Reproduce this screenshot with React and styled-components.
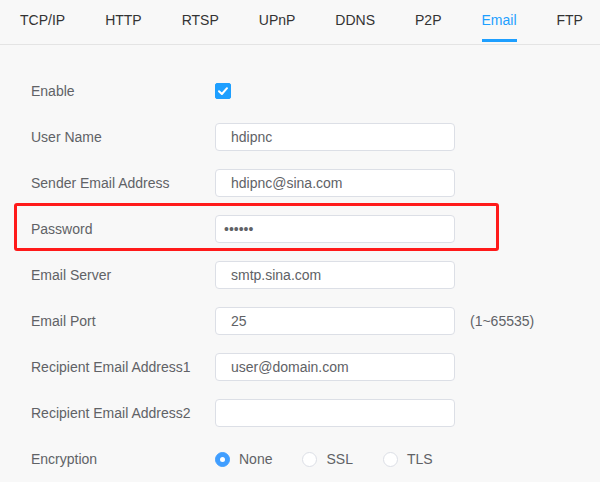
import React, { useState } from "react";
import styled, { createGlobalStyle } from "styled-components";

const TABS = ["TCP/IP", "HTTP", "RTSP", "UPnP", "DDNS", "P2P", "Email", "FTP"];

const FIELDS = [
  { id: "user", label: "User Name", value: "hdipnc" },
  { id: "sender", label: "Sender Email Address", value: "hdipnc@sina.com" },
  { id: "password", label: "Password", value: "123456", type: "password", marked: true },
  { id: "server", label: "Email Server", value: "smtp.sina.com" },
  { id: "port", label: "Email Port", value: "25", hint: "(1~65535)" },
  { id: "rcpt1", label: "Recipient Email Address1", value: "user@domain.com" },
  { id: "rcpt2", label: "Recipient Email Address2", value: "" },
];

const ENCRYPTIONS = ["None", "SSL", "TLS"];

function App() {
  const [tab, setTab] = useState("Email");
  const [enabled, setEnabled] = useState(true);
  const [encryption, setEncryption] = useState("None");
  const [values, setValues] = useState(
    Object.fromEntries(FIELDS.map((f) => [f.id, f.value]))
  );

  return (
    <>
      <GlobalStyle />
      <Page>
        <TabBar>
          {TABS.map((name) => (
            <Tab key={name} $active={name === tab} onClick={() => setTab(name)}>
              {name}
            </Tab>
          ))}
        </TabBar>

        <Form>
          <Row>
            <Label>Enable</Label>
            <Checkbox $checked={enabled} onClick={() => setEnabled(!enabled)}>
              {enabled && (
                <svg width="12" height="12" viewBox="0 0 12 12">
                  <path d="M2 6.2 L4.9 9 L10 3.2" fill="none" stroke="#fff" strokeWidth="2" strokeLinecap="round" strokeLinejoin="round" />
                </svg>
              )}
            </Checkbox>
          </Row>

          {FIELDS.map((f) => (
            <Row key={f.id} $marked={f.marked}>
              <Label>{f.label}</Label>
              <Input
                type={f.type || "text"}
                $password={f.type === "password"}
                value={values[f.id]}
                onChange={(e) => setValues({ ...values, [f.id]: e.target.value })}
              />
              {f.hint && <Hint>{f.hint}</Hint>}
            </Row>
          ))}

          <Row>
            <Label>Encryption</Label>
            <RadioGroup>
              {ENCRYPTIONS.map((opt) => (
                <RadioOption key={opt} onClick={() => setEncryption(opt)}>
                  <Radio $checked={encryption === opt} />
                  {opt}
                </RadioOption>
              ))}
            </RadioGroup>
          </Row>
        </Form>
      </Page>
    </>
  );
}

export default App;

const GlobalStyle = createGlobalStyle`
  body {
    margin: 0;
    background: #f8f8f8;
    font-family: "Liberation Sans", Arial, sans-serif;
  }
`;

const Page = styled.div`
  width: 600px;
  height: 482px;
  overflow: hidden;
  background: #f8f8f8;
`;

const TabBar = styled.div`
  display: flex;
  height: 44px;
  border-bottom: 1px solid #e4e4e4;
`;

const Tab = styled.div`
  position: relative;
  display: flex;
  align-items: center;
  padding: 0 20px 4px;
  font-size: 14px;
  white-space: nowrap;
  cursor: pointer;
  color: ${(p) => (p.$active ? "#1e9fff" : "#333")};

  &::after {
    content: "";
    display: ${(p) => (p.$active ? "block" : "none")};
    position: absolute;
    left: 20px;
    right: 20px;
    bottom: 2px;
    height: 3px;
    background: #1e9fff;
  }
`;

const Form = styled.div`
  padding-top: 23px;
`;

const Row = styled.div`
  position: relative;
  display: flex;
  align-items: center;
  height: 46px;
  padding-left: 31px;

  &::after {
    content: "";
    display: ${(p) => (p.$marked ? "block" : "none")};
    position: absolute;
    left: 14px;
    top: -3px;
    width: 485px;
    height: 48px;
    box-sizing: border-box;
    border: 3px solid #ff1a1a;
    border-radius: 3px;
    pointer-events: none;
  }
`;

const Label = styled.div`
  width: 184px;
  flex-shrink: 0;
  font-size: 14px;
  color: #606266;
`;

const Input = styled.input`
  box-sizing: border-box;
  width: 240px;
  height: 28px;
  padding: 0 ${(p) => (p.$password ? "8px" : "15px")};
  border: 1px solid #dcdfe6;
  border-radius: 4px;
  background: #fff;
  font-family: "Liberation Sans", Arial, sans-serif;
  font-size: 14px;
  color: #606266;
  outline: none;
`;

const Hint = styled.span`
  margin-left: 15px;
  font-size: 14px;
  color: #606266;
`;

const Checkbox = styled.div`
  display: flex;
  align-items: center;
  justify-content: center;
  width: 16px;
  height: 16px;
  box-sizing: border-box;
  border-radius: 2px;
  background: ${(p) => (p.$checked ? "#1e9fff" : "#fff")};
  border: 1px solid ${(p) => (p.$checked ? "#1e9fff" : "#dcdfe6")};
  cursor: pointer;
`;

const RadioGroup = styled.div`
  display: flex;
  align-items: center;
`;

const RadioOption = styled.label`
  display: flex;
  align-items: center;
  gap: 9px;
  margin-right: 30px;
  font-size: 14px;
  color: #606266;
  cursor: pointer;
`;

const Radio = styled.span`
  display: flex;
  align-items: center;
  justify-content: center;
  width: 15px;
  height: 15px;
  box-sizing: border-box;
  border-radius: 50%;
  border: 1px solid ${(p) => (p.$checked ? "#409eff" : "#dcdfe6")};
  background: ${(p) => (p.$checked ? "#409eff" : "#fff")};

  &::after {
    content: "";
    display: ${(p) => (p.$checked ? "block" : "none")};
    width: 5px;
    height: 5px;
    border-radius: 50%;
    background: #fff;
  }
`;
